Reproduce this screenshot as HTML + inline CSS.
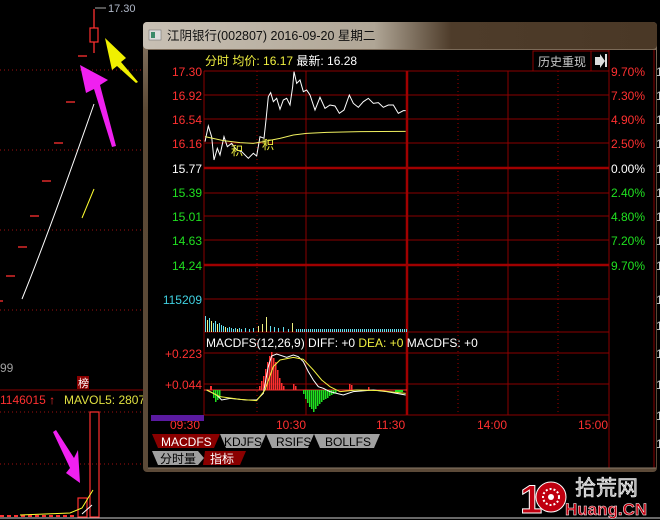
<!DOCTYPE html>
<html><head><meta charset="utf-8"><style>
html,body{margin:0;padding:0;background:#000;width:660px;height:520px;overflow:hidden}
svg{display:block}
text{font-family:"Liberation Sans","Noto Sans CJK SC",sans-serif}
</style></head><body>
<svg width="660" height="520" viewBox="0 0 660 520" xmlns="http://www.w3.org/2000/svg">
<defs>
<linearGradient id="tb" x1="0" y1="0" x2="1" y2="0">
<stop offset="0" stop-color="#c8c0b4"/><stop offset="0.45" stop-color="#b0a696"/><stop offset="0.6" stop-color="#4e3c2a"/><stop offset="1" stop-color="#4a3826"/></linearGradient>
<linearGradient id="fr" x1="0" y1="0" x2="0" y2="1">
<stop offset="0" stop-color="#8a7a68"/><stop offset="0.2" stop-color="#5a4834"/><stop offset="1" stop-color="#5c4a38"/></linearGradient>
</defs>
<rect width="660" height="520" fill="#000"/>
<g stroke="#a01010" stroke-dasharray="1,3" stroke-width="1">
<line x1="0" y1="70" x2="143" y2="70"/><line x1="0" y1="150" x2="143" y2="150"/>
<line x1="0" y1="230" x2="143" y2="230"/><line x1="0" y1="310" x2="143" y2="310"/>
<line x1="0" y1="412" x2="143" y2="412"/><line x1="0" y1="464" x2="143" y2="464"/>
</g>
<g stroke="#ff3030" stroke-width="1.3">
<line x1="78" y1="56" x2="87" y2="56"/><line x1="66" y1="102" x2="75" y2="102"/>
<line x1="54" y1="143" x2="63" y2="143"/><line x1="42" y1="181" x2="51" y2="181"/>
<line x1="30" y1="216" x2="39" y2="216"/><line x1="18" y1="247" x2="27" y2="247"/>
<line x1="6" y1="276" x2="15" y2="276"/><line x1="0" y1="301" x2="3" y2="301"/>
<line x1="94" y1="9" x2="94" y2="53"/></g>
<rect x="90" y="28" width="8" height="14" fill="#000" stroke="#ff3030" stroke-width="1.2"/>
<line x1="95" y1="8" x2="106" y2="8" stroke="#aaa"/><text x="108" y="12" fill="#b0b8c8" font-size="11">17.30</text>
<path d="M22 299 Q50 230 94 104" fill="none" stroke="#fff" stroke-width="1"/>
<line x1="82" y1="218" x2="94" y2="189" stroke="#ffff30"/>
<polygon points="80,65 108,80 100,85 116,146 112,147 94,89 86,93" fill="#f020f0"/>
<polygon points="105,38 126,58 121,62 138,82 136,83 117,66 112,70" fill="#f0f000"/>
<polygon points="56,430 74,458 78,450 80,483 66,473 70,468 53,432" fill="#f020f0"/>
<text x="0" y="372" fill="#a0a0a0" font-size="12">99</text>
<rect x="77" y="376" width="12" height="13" fill="#8a0000"/><text x="78" y="387" fill="#fff" font-size="11">榜</text>
<line x1="0" y1="390" x2="143" y2="390" stroke="#8a0000"/>
<text x="0" y="404" fill="#ff3030" font-size="12">1146015 ↑</text>
<text x="64" y="404" fill="#e0e040" font-size="12">MAVOL5: 2807</text>
<rect x="90" y="412" width="9" height="105" fill="none" stroke="#ff3030" stroke-width="1.2"/>
<rect x="78" y="498" width="9" height="19" fill="none" stroke="#ff3030" stroke-width="1.2"/>
<g stroke="#ff3030" stroke-width="2" stroke-dasharray="4,3"><line x1="0" y1="516" x2="75" y2="516"/></g>
<path d="M20 515 L70 513 L82 508 L93 490" fill="none" stroke="#ffff30"/>
<path d="M82 514 L92 505" fill="none" stroke="#fff"/>
<line x1="0" y1="518" x2="660" y2="518" stroke="#d0d0d0"/>
<rect x="143" y="22" width="514" height="450" rx="4" fill="url(#fr)"/>
<rect x="143" y="22" width="514" height="27" rx="4" fill="url(#tb)"/>
<rect x="149" y="30" width="12" height="10" fill="#ddd" stroke="#666" stroke-width="0.5"/><rect x="151" y="32" width="4" height="6" fill="#3a8a6a"/>
<text x="167" y="40" fill="#101010" font-size="12.5">江阴银行(002807) 2016-09-20 星期二</text>
<rect x="148" y="50" width="508" height="418" fill="#000"/>
<text x="205" y="65" font-size="12" fill="#f0f040">分时 均价: <tspan fill="#f0f040">16.17</tspan> <tspan fill="#fff">最新: 16.28</tspan></text>
<rect x="533" y="51" width="58" height="20" fill="none" stroke="#8a0000"/>
<text x="538" y="66" fill="#c8c8c8" font-size="12">历史重现</text>
<rect x="591" y="51" width="18" height="20" fill="none" stroke="#8a0000"/>
<path d="M595 57 h5 v-3 l5 7 l-5 7 v-3 h-5z" fill="#ddd"/><rect x="605" y="54" width="2" height="13" fill="#ddd"/>
<g stroke="#8a0000" stroke-width="1">
<line x1="204" y1="71" x2="609" y2="71"/><line x1="204" y1="95" x2="609" y2="95"/>
<line x1="204" y1="119" x2="609" y2="119"/><line x1="204" y1="143" x2="609" y2="143"/>
<line x1="204" y1="193" x2="609" y2="193"/><line x1="204" y1="216" x2="609" y2="216"/>
<line x1="204" y1="240" x2="609" y2="240"/><line x1="204" y1="299" x2="609" y2="299"/>
<line x1="204" y1="332" x2="609" y2="332"/><line x1="204" y1="353" x2="609" y2="353"/>
<line x1="204" y1="384" x2="609" y2="384"/><line x1="204" y1="415" x2="609" y2="415"/>
<line x1="306" y1="71" x2="306" y2="415"/><line x1="508" y1="71" x2="508" y2="415"/>
<line x1="609" y1="50" x2="609" y2="468"/><line x1="204" y1="71" x2="204" y2="415"/>
<line x1="654" y1="50" x2="654" y2="468"/>
</g>
<g stroke="#a00000" stroke-width="2.5"><line x1="204" y1="168" x2="609" y2="168"/><line x1="204" y1="265" x2="609" y2="265"/><line x1="407" y1="71" x2="407" y2="415"/></g>
<g stroke="#a00000" stroke-dasharray="1,3"><line x1="257" y1="71" x2="257" y2="415"/><line x1="458" y1="71" x2="458" y2="415"/><line x1="558" y1="71" x2="558" y2="415"/></g>
<line x1="204" y1="390" x2="407" y2="390" stroke="#ff3030"/>
<g font-size="12" text-anchor="end">
<text x="202" y="76" fill="#ff3030">17.30</text><text x="202" y="100" fill="#ff3030">16.92</text>
<text x="202" y="124" fill="#ff3030">16.54</text><text x="202" y="148" fill="#ff3030">16.16</text>
<text x="202" y="173" fill="#fff">15.77</text><text x="202" y="197" fill="#20e020">15.39</text>
<text x="202" y="221" fill="#20e020">15.01</text><text x="202" y="245" fill="#20e020">14.63</text>
<text x="202" y="270" fill="#20e020">14.24</text><text x="202" y="304" fill="#40d0e0">115209</text>
<text x="202" y="358" fill="#ff3030">+0.223</text><text x="202" y="389" fill="#ff3030">+0.044</text>
</g>
<g font-size="12">
<text x="611" y="76" fill="#ff3030">9.70%</text><text x="611" y="100" fill="#ff3030">7.30%</text>
<text x="611" y="124" fill="#ff3030">4.90%</text><text x="611" y="148" fill="#ff3030">2.50%</text>
<text x="611" y="173" fill="#fff">0.00%</text><text x="611" y="197" fill="#20e020">2.40%</text>
<text x="611" y="221" fill="#20e020">4.80%</text><text x="611" y="245" fill="#20e020">7.20%</text>
<text x="611" y="270" fill="#20e020">9.70%</text>
</g>
<g fill="#ccc" font-size="12"><text x="656" y="76">1</text><text x="656" y="100">1</text><text x="656" y="124">1</text><text x="656" y="148">1</text><text x="656" y="173">1</text><text x="656" y="197">1</text><text x="656" y="221">1</text><text x="656" y="245">1</text><text x="656" y="270">1</text><text x="656" y="304">1</text><text x="656" y="330">1</text><text x="656" y="358">1</text><text x="656" y="389">1</text><text x="656" y="420">1</text><text x="656" y="448">1</text></g>
<g transform="translate(140 20) scale(0.33333)">
<polyline fill="none" stroke="#fff" stroke-width="3" points="195,365 205,318 215,350 222,420 232,385 240,405 252,350 262,380 275,370 290,390 305,395 325,415 340,400 350,408 360,350 372,355 378,300 385,230 392,218 400,245 410,235 420,268 430,240 440,235 450,255 458,200 462,155 470,190 480,180 490,215 500,210 510,225 525,270 540,232 555,265 570,255 585,258 598,280 612,270 628,225 640,250 655,262 670,245 685,235 700,250 715,248 730,262 745,255 760,255 775,280 790,272 797,272"/>
<polyline fill="none" stroke="#f0f060" stroke-width="3" points="195,350 250,362 300,368 340,370 370,365 420,355 460,345 500,340 560,337 660,335 797,334"/>
</g>
<text x="231" y="155" fill="#f0f040" font-size="12">积</text><text x="262" y="149" fill="#f0f040" font-size="12">积</text>
<g fill="#60e0f0">
<rect x="205" y="316" width="1" height="16"/><rect x="207" y="320" width="1" height="12" fill="#f0f080"/><rect x="209" y="318" width="1" height="14"/><rect x="211" y="321" width="1" height="11" fill="#f0f080"/><rect x="213" y="323" width="1" height="9"/><rect x="215" y="321" width="1" height="11"/><rect x="217" y="324" width="1" height="8" fill="#f0f080"/><rect x="219" y="323" width="1" height="9"/><rect x="221" y="325" width="1" height="7"/><rect x="223" y="326" width="1" height="6"/><rect x="225" y="327" width="1" height="5" fill="#f0f080"/><rect x="227" y="328" width="1" height="4"/><rect x="229" y="327" width="1" height="5"/><rect x="231" y="328" width="1" height="4"/><rect x="233" y="329" width="1" height="3"/><rect x="235" y="328" width="1" height="4"/><rect x="237" y="329" width="1" height="3" fill="#f0f080"/><rect x="239" y="328" width="1" height="4"/>
<rect x="241" y="329" width="1" height="3"/><rect x="245" y="328" width="1" height="4"/><rect x="249" y="329" width="1" height="3"/><rect x="253" y="328" width="1" height="4"/><rect x="258" y="326" width="1" height="6" fill="#f0f080"/><rect x="262" y="324" width="1" height="8" fill="#f0f080"/><rect x="266" y="317" width="1" height="15" fill="#f0f080"/><rect x="270" y="326" width="1" height="6"/><rect x="274" y="327" width="1" height="5"/><rect x="278" y="328" width="1" height="4"/><rect x="283" y="327" width="1" height="5"/><rect x="288" y="329" width="1" height="3"/><rect x="292" y="323" width="1" height="9" fill="#f0f080"/>
</g>
<line x1="296" y1="330.5" x2="407" y2="330.5" stroke="#60e0f0" stroke-width="3" stroke-dasharray="1,1"/>
<text x="206" y="347" font-size="12" fill="#fff">MACDFS(12,26,9) DIFF: +0 <tspan fill="#f0f040">DEA: +0</tspan> MACDFS: +0</text>
<g fill="#ff3030">
<rect x="259" y="386" width="1.5" height="4"/><rect x="261" y="381" width="1.5" height="9"/><rect x="263" y="376" width="1.5" height="14"/><rect x="265" y="369" width="1.5" height="21"/><rect x="267" y="362" width="1.5" height="28"/><rect x="269" y="356" width="1.5" height="34"/><rect x="271" y="352" width="1.5" height="38"/><rect x="273" y="358" width="1.5" height="32"/><rect x="275" y="362" width="1.5" height="28"/><rect x="277" y="370" width="1.5" height="20"/><rect x="279" y="378" width="1.5" height="12"/><rect x="281" y="383" width="1.5" height="7"/><rect x="283" y="386" width="1.5" height="4"/><rect x="293" y="384" width="1.5" height="6"/><rect x="295" y="386" width="1.5" height="4"/><rect x="349" y="384" width="1.5" height="6"/><rect x="351" y="385" width="1.5" height="5"/><rect x="368" y="387" width="1.5" height="3"/><rect x="210" y="386" width="2" height="4"/>
</g>
<g fill="#20e020">
<rect x="213" y="390" width="1.5" height="8"/><rect x="215" y="390" width="1.5" height="12"/><rect x="217" y="390" width="1.5" height="10"/><rect x="219" y="390" width="1.5" height="8"/>
<rect x="303" y="390" width="1.5" height="4"/><rect x="305" y="390" width="1.5" height="9"/><rect x="307" y="390" width="1.5" height="13"/><rect x="309" y="390" width="1.5" height="17"/><rect x="311" y="390" width="1.5" height="19"/><rect x="313" y="390" width="1.5" height="22"/><rect x="315" y="390" width="1.5" height="19"/><rect x="317" y="390" width="1.5" height="16"/><rect x="319" y="390" width="1.5" height="14"/><rect x="321" y="390" width="1.5" height="12"/><rect x="323" y="390" width="1.5" height="10"/><rect x="325" y="390" width="1.5" height="9"/><rect x="327" y="390" width="1.5" height="8"/><rect x="329" y="390" width="1.5" height="6"/><rect x="331" y="390" width="1.5" height="5"/><rect x="333" y="390" width="1.5" height="4"/><rect x="335" y="390" width="1.5" height="3"/><rect x="395" y="390" width="8" height="2"/>
</g>
<g transform="translate(140 280) scale(0.33333)">
<polyline fill="none" stroke="#fff" stroke-width="3" points="200,330 230,345 245,360 270,355 320,360 350,360 370,340 385,260 395,228 410,222 440,232 460,225 475,230 490,245 505,275 520,300 535,320 550,325 570,335 590,340 610,345 640,335 700,330 740,335 770,340 797,345"/>
<polyline fill="none" stroke="#f0f040" stroke-width="3" points="200,330 240,350 300,358 350,362 375,330 400,260 420,240 460,232 490,238 520,270 545,300 570,320 600,335 650,330 720,332 797,340"/>
</g>
<g font-size="12" fill="#ff3030"><text x="170" y="429">09:30</text><text x="276" y="429">10:30</text><text x="376" y="429">11:30</text><text x="477" y="429">14:00</text><text x="578" y="429">15:00</text></g>
<rect x="151" y="415" width="53" height="6" fill="#5a1aa0"/>
<polygon points="152,434 220,434 214,448 158,448" fill="#8a0000"/>
<polygon points="220,434 266,434 260,448 226,448" fill="#a0a0a0"/>
<polygon points="266,434 314,434 308,448 272,448" fill="#a0a0a0"/>
<polygon points="314,434 380,434 374,448 320,448" fill="#a0a0a0"/>
<g font-size="12"><text x="161" y="446" fill="#fff">MACDFS</text><text x="224" y="446" fill="#000">KDJFS</text><text x="276" y="446" fill="#000">RSIFS</text><text x="325" y="446" fill="#000">BOLLFS</text></g>
<polygon points="152,451 198,451 204,458 198,465 158,465" fill="#a0a0a0"/>
<polygon points="205,451 246,451 240,465 203,465" fill="#8a0000"/>
<g font-size="12"><text x="160" y="463" fill="#000">分时量</text><text x="210" y="463" fill="#fff">指标</text></g>
<line x1="148" y1="468" x2="656" y2="468" stroke="#8a7a68"/>
<text x="520" y="513" font-size="40" font-weight="bold" fill="#c00010" stroke="#fff" stroke-width="1" font-family="Liberation Sans,sans-serif">1</text>
<circle cx="551" cy="497" r="15" fill="#c00010" stroke="#fff" stroke-width="1"/>
<circle cx="551" cy="497" r="8" fill="none" stroke="#fff" stroke-width="2" stroke-dasharray="2,2"/>
<circle cx="551" cy="497" r="3" fill="#fff"/>
<text x="575" y="495" font-size="21" fill="#b0b0b0" stroke="#fff" stroke-width="0.6">拾荒网</text>
<text x="565" y="515" font-size="17" font-weight="bold" fill="#c00010" stroke="#fff" stroke-width="0.5">Huang.CN</text>
</svg>
</body></html>
